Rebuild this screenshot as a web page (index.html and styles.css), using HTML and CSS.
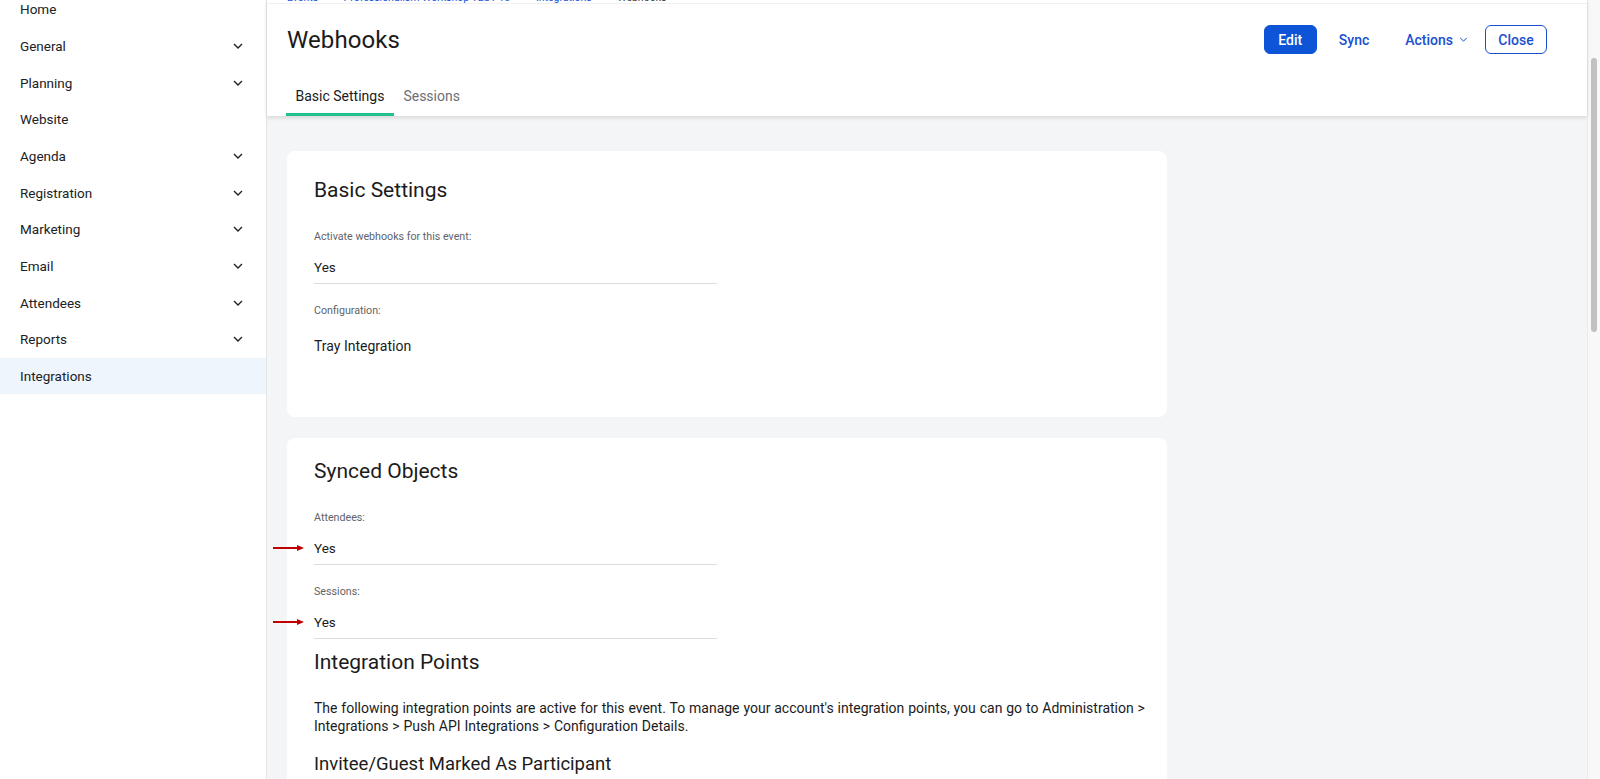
FILE: index.html
```html
<!DOCTYPE html>
<html lang="en">
<head>
<meta charset="utf-8">
<title>Webhooks</title>
<link rel="stylesheet" href="styles.css">
</head>
<body>
<aside class="sidebar">
  <nav class="nav">
    <div class="nav-item">Home</div>
    <div class="nav-item">General<svg class="chev" viewBox="0 0 10 6"><path d="M1 1l4 4 4-4"/></svg></div>
    <div class="nav-item">Planning<svg class="chev" viewBox="0 0 10 6"><path d="M1 1l4 4 4-4"/></svg></div>
    <div class="nav-item">Website</div>
    <div class="nav-item">Agenda<svg class="chev" viewBox="0 0 10 6"><path d="M1 1l4 4 4-4"/></svg></div>
    <div class="nav-item">Registration<svg class="chev" viewBox="0 0 10 6"><path d="M1 1l4 4 4-4"/></svg></div>
    <div class="nav-item">Marketing<svg class="chev" viewBox="0 0 10 6"><path d="M1 1l4 4 4-4"/></svg></div>
    <div class="nav-item">Email<svg class="chev" viewBox="0 0 10 6"><path d="M1 1l4 4 4-4"/></svg></div>
    <div class="nav-item">Attendees<svg class="chev" viewBox="0 0 10 6"><path d="M1 1l4 4 4-4"/></svg></div>
    <div class="nav-item">Reports<svg class="chev" viewBox="0 0 10 6"><path d="M1 1l4 4 4-4"/></svg></div>
    <div class="nav-item active">Integrations</div>
  </nav>
</aside>

<main class="main">
  <header class="header">
    <div class="crumbs">
      <a class="crumb">Events</a><span class="sep">&gt;</span>
      <a class="crumb">Professionalism Workshop TEST 13</a><span class="sep">&gt;</span>
      <a class="crumb">Integrations</a><span class="sep">&gt;</span>
      <span class="crumb current">Webhooks</span>
    </div>
    <div class="title-row">
      <h1 class="title">Webhooks</h1>
      <div class="actions">
        <button class="btn btn-primary">Edit</button>
        <button class="btn btn-text btn-sync">Sync</button>
        <button class="btn btn-text btn-actions">Actions<svg class="chev-sm" viewBox="0 0 10 6"><path d="M1 1l4 4 4-4"/></svg></button>
        <button class="btn btn-outline">Close</button>
      </div>
    </div>
    <div class="tabs">
      <div class="tab active">Basic Settings</div>
      <div class="tab">Sessions</div>
    </div>
  </header>

  <section class="content">
    <div class="card card-basic">
      <h2 class="card-title">Basic Settings</h2>
      <div class="label label-first">Activate webhooks for this event:</div>
      <div class="value value-line">Yes</div>
      <div class="label label-after-line">Configuration:</div>
      <div class="value value-plain">Tray Integration</div>
    </div>

    <div class="card card-synced">
      <h2 class="card-title">Synced Objects</h2>
      <div class="label label-first">Attendees:</div>
      <div class="value value-line"><span class="arrow"></span>Yes</div>
      <div class="label label-after-line">Sessions:</div>
      <div class="value value-line"><span class="arrow"></span>Yes</div>
      <h2 class="card-title section-title">Integration Points</h2>
      <p class="para">The following integration points are active for this event. To manage your account's integration points, you can go to Administration &gt; Integrations &gt; Push API Integrations &gt; Configuration Details.</p>
      <h3 class="sub-title">Invitee/Guest Marked As Participant</h3>
    </div>
  </section>
</main>

<div class="scrollbar"><div class="thumb"></div></div>
</body>
</html>
```

FILE: styles.css
```css
* { box-sizing: border-box; }

html, body {
  margin: 0;
  height: 100%;
}

body {
  display: flex;
  overflow: hidden;
  font-family: Roboto, "Liberation Sans", Arial, sans-serif;
  color: #1f1f1f;
  background: #f4f5f7;
}

/* Sidebar */
.sidebar {
  width: 267px;
  flex: none;
  background: #ffffff;
  border-right: 1px solid #e4e5e7;
  overflow: hidden;
}

.nav {
  margin-top: -9px;
}

.nav-item {
  height: 36.67px;
  display: flex;
  align-items: center;
  justify-content: space-between;
  padding: 0 23px 0 20px;
  font-size: 13.5px;
  color: #202124;
}

.nav-item.active {
  background: #eef5fd;
}

.chev {
  width: 10px;
  height: 6px;
  fill: none;
  stroke: #222;
  stroke-width: 1.4;
}

/* Main */
.main {
  flex: 1;
  min-width: 0;
  display: flex;
  flex-direction: column;
  background: #f4f5f7;
}

.header {
  background: #ffffff;
  padding: 0 40px 0 20px;
  box-shadow: 0 2px 4px rgba(0, 0, 0, 0.12);
  position: relative;
  z-index: 1;
}

.crumbs {
  margin: -8px -40px 0 -20px;
  padding-left: 20px;
  height: 12px;
  line-height: 11px;
  font-size: 10.5px;
  border-bottom: 1px solid #f0f0f0;
  display: flex;
  white-space: nowrap;
}

.crumb {
  color: #1a56db;
}

.crumb.current {
  color: #444;
}

.sep {
  color: #777;
  margin: 0 10px;
}

.title-row {
  height: 71px;
  display: flex;
  align-items: center;
  justify-content: space-between;
}

.title {
  margin: 0;
  font-size: 24px;
  font-weight: 400;
  color: #1b1b1b;
  letter-spacing: 0.1px;
}

.actions {
  display: flex;
  align-items: center;
}

.btn {
  height: 29px;
  font-family: Roboto, "Liberation Sans", Arial, sans-serif;
  font-size: 14px;
  font-weight: 500;
  border-radius: 6px;
  border: 1px solid transparent;
  background: none;
  color: #1a4fd0;
  display: flex;
  align-items: center;
  cursor: pointer;
}

.btn-primary {
  width: 53px;
  justify-content: center;
  background: #0d55d6;
  border-color: #0d55d6;
  color: #ffffff;
  padding: 0;
}

.btn-text {
  padding: 0 16px;
}

.btn-sync {
  margin-left: 5px;
}

.btn-actions {
  margin-left: 2px;
  padding-right: 13px;
}

.btn-outline {
  width: 62px;
  justify-content: center;
  border-color: #1a4fd0;
  padding: 0;
  margin-left: 3px;
}

.chev-sm {
  width: 9px;
  height: 5px;
  margin-left: 6px;
  fill: none;
  stroke: #1a4fd0;
  stroke-width: 1.2;
}

.tabs {
  height: 41px;
  display: flex;
  margin-left: -1px;
}

.tab {
  height: 41px;
  padding: 3px 9.5px 0;
  border-bottom: 3px solid transparent;
  display: flex;
  align-items: center;
  font-size: 14px;
  color: #6b6f75;
}

.tab.active {
  color: #1b1b1b;
  border-bottom-color: #22c08c;
}

/* Content */
.content {
  padding: 35px 20px 0 20px;
  display: flex;
  flex-direction: column;
  gap: 21px;
}

.card {
  width: 880px;
  background: #ffffff;
  border-radius: 8px;
  padding: 0 27px;
}

.card-basic {
  height: 266px;
  padding-top: 27px;
}

.card-synced {
  padding-top: 21px;
  padding-bottom: 40px;
}

.card-title {
  margin: 0;
  font-size: 21px;
  line-height: 24px;
  font-weight: 400;
  color: #1b1b1b;
}

.label {
  font-size: 10.7px;
  line-height: 16px;
  color: #5f6368;
}

.label-first {
  margin-top: 27px;
}

.label-after-line {
  margin-top: 19px;
}

.value {
  font-size: 13.5px;
  line-height: 20px;
  color: #1b1b1b;
  position: relative;
}

.value-line {
  width: 403px;
  padding: 12px 0 6px;
  border-bottom: 1px solid #dcdcdc;
}

.value-plain {
  padding-top: 17px;
  font-size: 14px;
}

.arrow {
  position: absolute;
  left: -41px;
  top: 21px;
  width: 25px;
  height: 1.5px;
  background: #c00000;
}

.arrow::after {
  content: "";
  position: absolute;
  right: -6px;
  top: -2.5px;
  border-left: 7px solid #c00000;
  border-top: 3.25px solid transparent;
  border-bottom: 3.25px solid transparent;
}

.section-title {
  margin-top: 11px;
}

.para {
  margin: 26px -14px 0 0;
  font-size: 14px;
  line-height: 17.5px;
  word-spacing: 0.4px;
  color: #1b1b1b;
}

.sub-title {
  margin: 17px 0 0;
  font-size: 18.5px;
  line-height: 24px;
  font-weight: 400;
  color: #1b1b1b;
}

/* Fake page scrollbar */
.scrollbar {
  width: 13px;
  flex: none;
  background: #f8f8f8;
  border-left: 1px solid #ebebeb;
  padding: 58px 3px 0 3px;
}

.thumb {
  height: 274px;
  border-radius: 3px;
  background: #c1c1c1;
}
```
